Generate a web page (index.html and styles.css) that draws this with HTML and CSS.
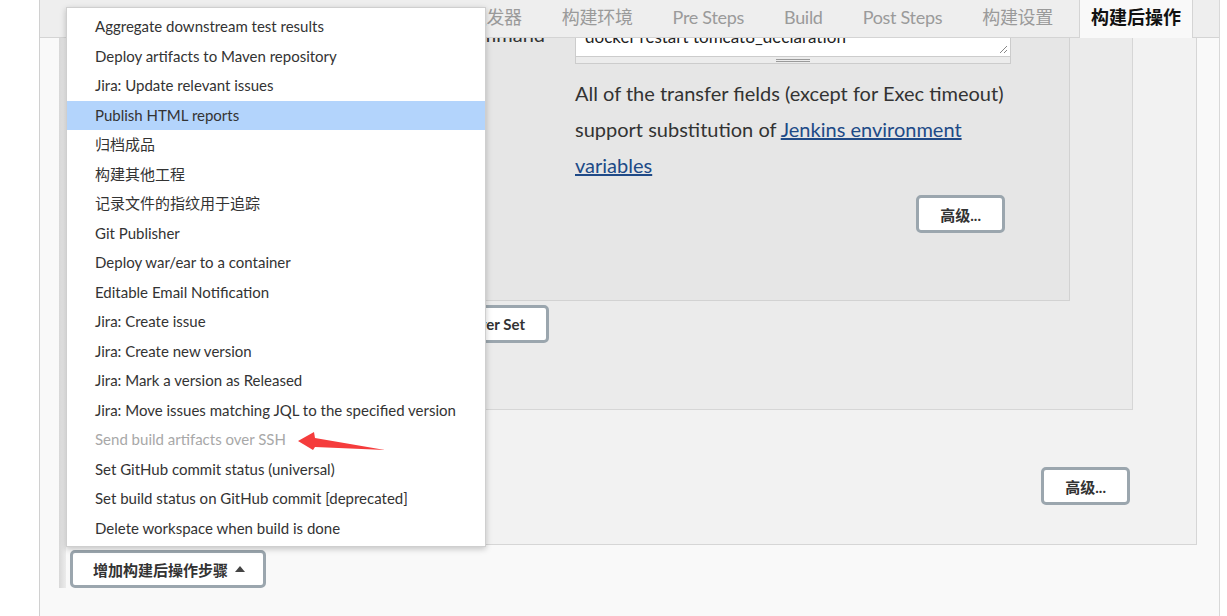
FILE: index.html
```html
<!DOCTYPE html>
<html lang="zh-CN">
<head>
  <meta charset="UTF-8" />
  <title>配置 - Jenkins</title>
  <link rel="stylesheet" href="styles.css">
</head>
<body>

  <div id="main">
    <div class="tabs">
      <div class="tab">构建触发器</div>
      <div class="tab">构建环境</div>
      <div class="tab">Pre Steps</div>
      <div class="tab">Build</div>
      <div class="tab">Post Steps</div>
      <div class="tab">构建设置</div>
      <div class="tab active">构建后操作</div>
    </div>

    <div class="chunks">
      <div class="panel outer">
        <div class="panel middle">
          <div class="panel inner">
            <div class="setting">
              <div class="setting-name">Exec command</div>
              <div class="setting-main">
                <div class="textarea">
                  <div>docker restart tomcat8_declaration</div>
                  <svg class="grip" width="9" height="9" viewBox="0 0 9 9">
                    <path d="M8 1 L1 8 M8 5 L5 8" stroke="#888" stroke-width="1" />
                  </svg>
                </div>
                <div class="textarea-handle"><span></span></div>
              </div>
            </div>
            <div class="help">
              All of the transfer fields (except for Exec timeout)<br>
              support substitution of <a href="#">Jenkins environment<br>variables</a>
            </div>
            <div class="btn-row help-row"><button class="btn">高级...</button></div>
          </div>
          <div class="btn-row server-row"><button class="btn">Add Server Set</button></div>
        </div>
        <div class="btn-row outer-row"><button class="btn">高级...</button></div>
      </div>
      <button class="btn add-btn">增加构建后操作步骤 <span class="caret"></span></button>
    </div>

    <!-- dropdown of the add button -->
    <ul class="menu">
      <li>Aggregate downstream test results</li>
      <li>Deploy artifacts to Maven repository</li>
      <li>Jira: Update relevant issues</li>
      <li class="hover">Publish HTML reports</li>
      <li>归档成品</li>
      <li>构建其他工程</li>
      <li>记录文件的指纹用于追踪</li>
      <li>Git Publisher</li>
      <li>Deploy war/ear to a container</li>
      <li>Editable Email Notification</li>
      <li>Jira: Create issue</li>
      <li>Jira: Create new version</li>
      <li>Jira: Mark a version as Released</li>
      <li>Jira: Move issues matching JQL to the specified version</li>
      <li class="disabled">Send build artifacts over SSH</li>
      <li>Set GitHub commit status (universal)</li>
      <li>Set build status on GitHub commit [deprecated]</li>
      <li>Delete workspace when build is done</li>
    </ul>

    <svg class="arrow" width="100" height="30" viewBox="0 0 100 30">
      <polygon points="2,11 18,2 19,8 89,20 19,17 17,20" fill="#f53c3c" />
    </svg>
  </div>

</body>
</html>
```

FILE: styles.css
```css
body {
  margin: 0;
  background: #fff;
  font-family: "Lato", "Noto Sans CJK SC", sans-serif;
  color: #333;
  height: 616px;
  overflow: hidden;
}
#main {
  position: relative;
  margin-left: 39px;
  width: 1179px;
  height: 616px;
  border-left: 1px solid #d0d0d0;
  border-right: 1px solid #d8d8d8;
  background: #f9f9f9;
  overflow: hidden;
}
.tabs {
  position: absolute;
  top: 0;
  left: 0;
  right: 0;
  height: 38px;
  box-sizing: border-box;
  display: flex;
  justify-content: flex-end;
  align-items: flex-start;
  padding-right: 26px;
  background: #eee;
  border-bottom: 1px solid #d4d4d4;
  z-index: 2;
}
.tab {
  flex-shrink: 0;
  white-space: nowrap;
  padding: 0 20px;
  height: 37px;
  line-height: 35px;
  font-size: 18px;
  letter-spacing: -0.3px;
  color: #9a9a9a;
}
.tab.active {
  margin-left: 6px;
  padding: 0 11px;
  height: 38px;
  letter-spacing: normal;
  background: #f9f9f9;
  border-left: 1px solid #d4d4d4;
  border-right: 1px solid #d4d4d4;
  color: #111;
  font-weight: bold;
}
.chunks {
  display: flex;
  flex-direction: column;
  align-items: flex-start;
  margin: -40px 22px 0 19px;
  padding-left: 7px;
  background: linear-gradient(to right, #d8d8d8, #ececec) no-repeat left top / 7px 100%;
}
.panel {
  align-self: stretch;
  border: 1px solid #d6d6d6;
}
.outer {
  background: #f2f2f2;
  padding: 5px 63px 39px 5px;
}
.middle {
  background: #ebebeb;
  padding: 5px 62px 66px 5px;
}
.inner {
  background: #e6e6e6;
  border-color: #d2d2d2;
  padding: 7px 0 67px 0;
}
.setting {
  display: flex;
}
.setting-name {
  width: 496px;
  box-sizing: border-box;
  padding: 36px 30px 0 0;
  text-align: right;
  font-size: 20px;
  line-height: 36px;
  white-space: nowrap;
}
.setting-main {
  width: 436px;
}
.textarea {
  position: relative;
  height: 77px;
  box-sizing: border-box;
  display: flex;
  flex-direction: column;
  justify-content: flex-end;
  padding: 0 9px 9px;
  background: #fff;
  border: 1px solid #ccc;
  font-size: 17px;
  line-height: 20px;
  color: #222;
  overflow: hidden;
}
.grip {
  position: absolute;
  right: 2px;
  bottom: 2px;
}
.textarea-handle {
  height: 6px;
  display: flex;
  justify-content: center;
  align-items: center;
  border: 1px solid #ccc;
  border-top: none;
  background: #ececec;
}
.textarea-handle span {
  width: 34px;
  height: 1px;
  border-top: 1px solid #9a9a9a;
  border-bottom: 1px solid #9a9a9a;
}
.help {
  margin: 11px 0 0 496px;
  width: 440px;
  font-size: 20px;
  line-height: 36px;
  white-space: nowrap;
}
.help a {
  color: #204a87;
  text-decoration: underline;
}
.btn-row {
  display: flex;
  justify-content: flex-end;
}
.help-row {
  margin: 12px 0 0 496px;
  width: 430px;
}
.server-row {
  margin-top: 4px;
  width: 471px;
}
.outer-row {
  margin: 57px 3px 0 0;
}
.btn {
  height: 38px;
  box-sizing: border-box;
  padding: 0 21px;
  background: #fff;
  border: 3px solid #9ba6ae;
  border-radius: 5px;
  font-family: "Lato", "Noto Sans CJK SC", sans-serif;
  font-size: 15px;
  font-weight: bold;
  color: #333;
  cursor: pointer;
}
.add-btn {
  margin: 5px 0 0 4px;
  padding: 0 18px 0 20px;
  display: flex;
  align-items: center;
}
.caret {
  margin-left: 7px;
  width: 0;
  height: 0;
  border-left: 5px solid transparent;
  border-right: 5px solid transparent;
  border-bottom: 6px solid #444;
}
.menu {
  position: absolute;
  left: 26px;
  top: 7px;
  width: 420px;
  box-sizing: border-box;
  margin: 0;
  padding: 4px 0 3px;
  list-style: none;
  background: #fff;
  border: 1px solid #cfcfcf;
  box-shadow: 0 2px 6px rgba(0, 0, 0, 0.22);
  z-index: 3;
}
.menu li {
  height: 29.5px;
  line-height: 29.5px;
  padding-left: 28px;
  font-size: 15px;
  color: #333;
  white-space: nowrap;
}
.menu li.hover {
  background: #b3d4fc;
}
.menu li.disabled {
  color: #a8a8a8;
}
.arrow {
  position: absolute;
  left: 256px;
  top: 430px;
  z-index: 4;
}
```
